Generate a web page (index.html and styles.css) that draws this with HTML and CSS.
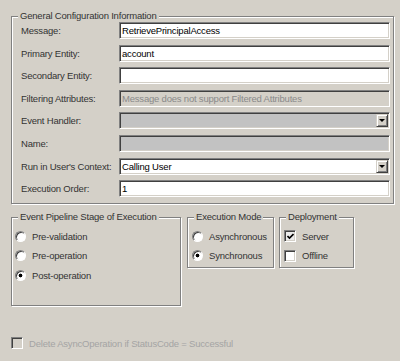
FILE: index.html
```html
<!DOCTYPE html>
<html lang="en">
<head>
    <meta charset="UTF-8">
    <title>Step Registration</title>
    <link rel="stylesheet" href="styles.css">
</head>
<body>
    <div class="dialog">
        <fieldset class="group general">
            <legend>General Configuration Information</legend>
            <div class="fields">
                <label class="lbl">Message:</label>
                <div class="box">RetrievePrincipalAccess</div>

                <label class="lbl">Primary Entity:</label>
                <div class="box">account</div>

                <label class="lbl">Secondary Entity:</label>
                <div class="box"></div>

                <label class="lbl">Filtering Attributes:</label>
                <div class="box readonly">Message does not support Filtered Attributes</div>

                <label class="lbl">Event Handler:</label>
                <div class="box combo disabled">
                    <span class="combo-text"></span>
                    <span class="combo-btn"><i class="tri"></i></span>
                </div>

                <label class="lbl">Name:</label>
                <div class="box disabled"></div>

                <label class="lbl">Run in User's Context:</label>
                <div class="box combo">
                    <span class="combo-text">Calling User</span>
                    <span class="combo-btn"><i class="tri"></i></span>
                </div>

                <label class="lbl">Execution Order:</label>
                <div class="box">1</div>
            </div>
        </fieldset>

        <div class="lower">
            <fieldset class="group stage">
                <legend>Event Pipeline Stage of Execution</legend>
                <div class="options">
                    <div class="opt"><span class="radio"></span>Pre-validation</div>
                    <div class="opt"><span class="radio"></span>Pre-operation</div>
                    <div class="opt"><span class="radio checked"></span>Post-operation</div>
                </div>
            </fieldset>

            <fieldset class="group mode">
                <legend>Execution Mode</legend>
                <div class="options">
                    <div class="opt"><span class="radio"></span>Asynchronous</div>
                    <div class="opt"><span class="radio checked"></span>Synchronous</div>
                </div>
            </fieldset>

            <fieldset class="group deploy">
                <legend>Deployment</legend>
                <div class="options">
                    <div class="opt">
                        <span class="check on">
                            <svg width="7" height="7" viewBox="0 0 7 7"><polyline points="0.5,3 2.5,5 6.5,1" fill="none" stroke="#000" stroke-width="1.6"/></svg>
                        </span>Server
                    </div>
                    <div class="opt"><span class="check"></span>Offline</div>
                </div>
            </fieldset>
        </div>

        <div class="cleanup">
            <span class="check off"></span>
            <span class="muted">Delete AsyncOperation if StatusCode = Successful</span>
        </div>
    </div>
</body>
</html>
```

FILE: styles.css
```css
body, html {
    margin: 0;
    padding: 0;
    background: #d4d0c8;
    font-family: "Liberation Sans", Arial, sans-serif;
    font-size: 9.5px;
    letter-spacing: -0.2px;
    color: #222;
}

.dialog {
    width: 400px;
    height: 361px;
    padding-left: 11px;
    box-sizing: border-box;
    overflow: hidden;
}

/* etched group boxes */
.group {
    margin: 0;
    padding: 0;
    min-width: 0;
    box-sizing: border-box;
    border: 1px solid #808080;
    box-shadow: inset 1px 1px 0 #fff, 1px 1px 0 #fff;
}

.group legend {
    margin-left: 6px;
    padding: 0 2px;
    line-height: 12px;
    background: #d4d0c8;
    color: #333;
}

.general {
    width: 383px;
    margin-top: 10px;
}

.fields {
    display: grid;
    grid-template-columns: 98px 271px;
    grid-auto-rows: 17px;
    row-gap: 5.6px;
    align-items: center;
    padding: 0 3px 6px 9px;
}

.lbl {
    color: #333;
}

/* sunken edit boxes */
.box {
    height: 17px;
    box-sizing: border-box;
    border: 1px solid;
    border-color: #808080 #fff #fff #808080;
    box-shadow: inset 1px 1px 0 #404040, inset -1px -1px 0 #d4d0c8;
    background: #fff;
    color: #000;
    padding-left: 2px;
    line-height: 15px;
    white-space: nowrap;
    overflow: hidden;
}

.box.readonly {
    background: #d4d0c8;
    color: #8a8a8a;
}

.box.disabled {
    background: #c2c2c2;
}

.combo {
    display: flex;
    padding: 1px;
}

.combo-text {
    flex: 1;
    padding-left: 1px;
    line-height: 13px;
}

.combo-btn {
    width: 12px;
    height: 13px;
    box-sizing: border-box;
    border: 1px solid;
    border-color: #d4d0c8 #404040 #404040 #d4d0c8;
    box-shadow: inset 1px 1px 0 #fff, inset -1px -1px 0 #808080;
    background: #d4d0c8;
    display: flex;
    align-items: center;
    justify-content: center;
}

.tri {
    width: 0;
    height: 0;
    border-left: 3px solid transparent;
    border-right: 3px solid transparent;
    border-top: 3px solid #000;
}

/* lower row of option groups */
.lower {
    display: flex;
    align-items: flex-start;
    margin-top: 7px;
}

.stage {
    width: 170px;
    height: 95px;
}

.mode {
    width: 87px;
    height: 57px;
    margin-left: 6px;
}

.deploy {
    width: 75px;
    height: 57px;
    margin-left: 5px;
}

.options {
    display: flex;
    flex-direction: column;
    gap: 7.5px;
    padding: 7px 0 0 4px;
}

.stage .options {
    padding-left: 3px;
}

.opt {
    display: flex;
    align-items: center;
    gap: 6px;
    height: 12px;
    color: #333;
}

.radio {
    width: 11px;
    height: 11px;
    box-sizing: border-box;
    border-radius: 50%;
    border: 1px solid;
    border-color: #808080 #fff #fff #808080;
    box-shadow: inset 1px 1px 0 #404040;
    background: #fff;
}

.radio.checked {
    background: radial-gradient(circle, #000 1.6px, #fff 2.2px);
}

.check {
    width: 12px;
    height: 12px;
    box-sizing: border-box;
    border: 1px solid;
    border-color: #808080 #fff #fff #808080;
    box-shadow: inset 1px 1px 0 #404040, inset -1px -1px 0 #d4d0c8;
    background: #fff;
    display: flex;
    align-items: center;
    justify-content: center;
}

.check.on {
    background: #ececec;
}

.check.off {
    background: #d4d0c8;
}

.cleanup {
    display: flex;
    align-items: center;
    gap: 6px;
    margin-top: 31px;
}

.muted {
    color: #a4a4a4;
}
```
